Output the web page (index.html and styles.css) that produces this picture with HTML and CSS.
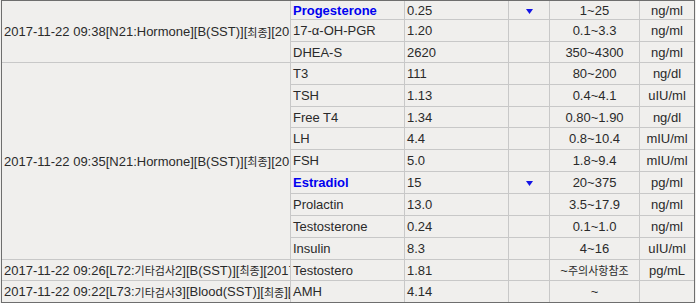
FILE: index.html
```html
<!DOCTYPE html>
<html lang="ko">
<head>
<meta charset="utf-8">
<title>검사 결과</title>
<link rel="stylesheet" href="styles.css">
</head>
<body>
<div class="results">
  <div class="c order span3">2017-11-22 09:38[N21:Hormone][B(SST)][<span class="ko">최종</span>][2017-11-22 09:38]</div>
  <div class="c name hi">Progesterone</div><div class="c val">0.25</div><div class="c flag"><svg class="down" width="7" height="5" viewBox="0 0 7 5"><polygon points="0,0 7,0 3.5,5"/></svg></div><div class="c ref">1~25</div><div class="c unit">ng/ml</div>
  <div class="c name">17-α-OH-PGR</div><div class="c val">1.20</div><div class="c flag"></div><div class="c ref">0.1~3.3</div><div class="c unit">ng/ml</div>
  <div class="c name">DHEA-S</div><div class="c val">2620</div><div class="c flag"></div><div class="c ref">350~4300</div><div class="c unit">ng/ml</div>

  <div class="c order span9">2017-11-22 09:35[N21:Hormone][B(SST)][<span class="ko">최종</span>][2017-11-22 09:35]</div>
  <div class="c name">T3</div><div class="c val">111</div><div class="c flag"></div><div class="c ref">80~200</div><div class="c unit">ng/dl</div>
  <div class="c name">TSH</div><div class="c val">1.13</div><div class="c flag"></div><div class="c ref">0.4~4.1</div><div class="c unit">uIU/ml</div>
  <div class="c name">Free T4</div><div class="c val">1.34</div><div class="c flag"></div><div class="c ref">0.80~1.90</div><div class="c unit">ng/dl</div>
  <div class="c name">LH</div><div class="c val">4.4</div><div class="c flag"></div><div class="c ref">0.8~10.4</div><div class="c unit">mIU/ml</div>
  <div class="c name">FSH</div><div class="c val">5.0</div><div class="c flag"></div><div class="c ref">1.8~9.4</div><div class="c unit">mIU/ml</div>
  <div class="c name hi">Estradiol</div><div class="c val">15</div><div class="c flag"><svg class="down" width="7" height="5" viewBox="0 0 7 5"><polygon points="0,0 7,0 3.5,5"/></svg></div><div class="c ref">20~375</div><div class="c unit">pg/ml</div>
  <div class="c name">Prolactin</div><div class="c val">13.0</div><div class="c flag"></div><div class="c ref">3.5~17.9</div><div class="c unit">ng/ml</div>
  <div class="c name">Testosterone</div><div class="c val">0.24</div><div class="c flag"></div><div class="c ref">0.1~1.0</div><div class="c unit">ng/ml</div>
  <div class="c name">Insulin</div><div class="c val">8.3</div><div class="c flag"></div><div class="c ref">4~16</div><div class="c unit">uIU/ml</div>

  <div class="c order">2017-11-22 09:26[L72:<span class="ko">기타검사</span>2][B(SST)][<span class="ko">최종</span>][2017-11-22 09:26]</div>
  <div class="c name">Testostero</div><div class="c val">1.81</div><div class="c flag"></div><div class="c ref">~<span class="ko">주의사항참조</span></div><div class="c unit">pg/mL</div>

  <div class="c order">2017-11-22 09:22[L73:<span class="ko">기타검사</span>3][Blood(SST)][<span class="ko">최종</span>][2017-11-22 09:22]</div>
  <div class="c name">AMH</div><div class="c val">4.14</div><div class="c flag"></div><div class="c ref">~</div><div class="c unit"></div>
</div>
</body>
</html>
```
FILE: styles.css
```css
html, body {
  margin: 0;
  padding: 0;
  background: #f0efed;
}

body {
  font-family: "Liberation Sans", Arial, "Noto Sans CJK KR", sans-serif;
  font-size: 13px;
  color: #2a2a2a;
}

.results {
  display: grid;
  grid-template-columns: 288px 113px 103px 40px 89px 54px;
  grid-template-rows: 18px 21px 20px 21px 21px 20px 21px 21px 21px 21px 21px 21px 20px 21px;
  gap: 1px;
  width: max-content;
  margin-left: 1px;
  background: #c8c8c8;
  border: 1px solid #6e6e6e;
}

.c {
  background: #f0efed;
  display: flex;
  align-items: center;
  white-space: nowrap;
  overflow: hidden;
  padding: 0 2px;
}

.span3 { grid-row: span 3; }
.span9 { grid-row: span 9; }

.order { padding-left: 2px; }

.name { padding-left: 2px; }
.val { padding-left: 2px; }

.flag, .ref, .unit {
  justify-content: center;
  padding: 0;
}

.hi {
  color: #0000f0;
  font-weight: bold;
}

.ko {
  font-family: "Noto Sans CJK KR", sans-serif;
  font-size: 11px;
}

.down {
  display: block;
  fill: #1414e6;
  margin-top: 2px;
}
```
